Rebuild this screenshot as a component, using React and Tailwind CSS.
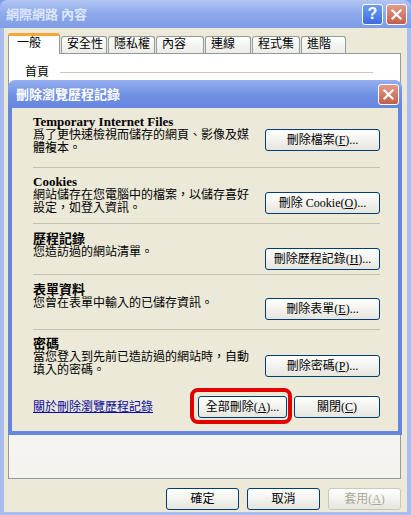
import React from 'react';

const XBtn = ({ className = '' }) => (
  <div className={`w-[21px] h-[21px] rounded-[3px] border border-white bg-linear-to-b from-[#E39A88] to-[#C25F4B] flex items-center justify-center ${className}`}>
    <svg width="13" height="13" viewBox="0 0 13 13">
      <path d="M2.5 2.5 L10.5 10.5 M10.5 2.5 L2.5 10.5" stroke="white" strokeWidth="2.2" strokeLinecap="square" />
    </svg>
  </div>
);

const HelpBtn = () => (
  <div className="w-[21px] h-[21px] rounded-[3px] border border-white bg-linear-to-b from-[#6E9BF2] to-[#3A6FE0] flex items-center justify-center">
    <span className="text-white font-bold text-[16px] leading-none font-['Liberation_Sans',sans-serif]">?</span>
  </div>
);

// XP style push button
const Btn = ({ children, className = '', disabled }) => (
  <div
    className={`h-[22px] rounded-[3px] border bg-linear-to-b from-white to-[#E6E5DE] flex items-center justify-center text-[12px] leading-none ${
      disabled ? 'border-[#C9C7BA] text-[#ACA899]' : 'border-[#003C74] text-black'
    } ${className}`}
  >
    {children}
  </div>
);

const Key = ({ k, suffix = '' }) => (
  <span>
    (<u>{k}</u>){suffix}
  </span>
);

const tabs = [
  { label: '安全性', w: 'w-[46px]' },
  { label: '隱私權', w: 'w-[47px]' },
  { label: '內容', w: 'w-[48px]' },
  { label: '連線', w: 'w-[46px]' },
  { label: '程式集', w: 'w-[48px]' },
  { label: '進階', w: 'w-[45px]' },
];

const sections = [
  {
    title: 'Temporary Internet Files',
    lines: ['爲了更快速檢視而儲存的網頁、影像及媒', '體複本。'],
    btn: <>刪除檔案<Key k="F" suffix="..." /></>,
    box: 'h-[52px] pt-0',
    btnTop: 'mt-[14px]',
  },
  {
    title: 'Cookies',
    lines: ['網站儲存在您電腦中的檔案，以儲存喜好', '設定，如登入資訊。'],
    btn: <>刪除 Cookie<Key k="O" suffix="..." /></>,
    box: 'h-[55px] pt-[7px]',
    btnTop: 'mt-[17px]',
  },
  {
    title: '歷程記錄',
    lines: ['您造訪過的網站清單。'],
    btn: <>刪除歷程記錄<Key k="H" suffix="..." /></>,
    box: 'h-[50px] pt-[8px]',
    btnTop: 'mt-[16px]',
  },
  {
    title: '表單資料',
    lines: ['您曾在表單中輸入的已儲存資訊。'],
    btn: <>刪除表單<Key k="E" suffix="..." /></>,
    box: 'h-[54px] pt-[8px]',
    btnTop: 'mt-[15px]',
  },
  {
    title: '密碼',
    lines: ['當您登入到先前已造訪過的網站時，自動', '填入的密碼。'],
    btn: <>刪除密碼<Key k="P" suffix="..." /></>,
    box: 'h-[50px] pt-[7px]',
    btnTop: 'mt-[18px]',
  },
];

export default function App() {
  return (
    <div className="w-[411px] h-[515px] relative bg-[#7E9BE6] overflow-hidden font-['Liberation_Serif','Noto_Sans_CJK_TC',serif] text-black">
      {/* outer title bar (inactive) */}
      <div className="h-[28px] rounded-t-[7px] bg-linear-to-b from-[#B2C6F4] via-[#8DA9EB] to-[#7F9CE6] flex items-center pl-[6px] pr-[4px] gap-[3px]">
        <span className="flex-1 text-[#DDE6FA] font-bold text-[13px] font-['Noto_Sans_CJK_TC',sans-serif]">網際網路 內容</span>
        <HelpBtn />
        <XBtn />
      </div>

      {/* outer body */}
      <div className="h-[487px] border-x-[4px] border-b-[3px] border-[#A8BCEE] bg-[#ECE9D8] flex flex-col pl-[4px] pr-[6px]">
        {/* tabs */}
        <div className="h-[25px] pt-[5px] flex items-end relative z-10">
          <div className="w-[52px] h-[21px] -mb-[1px] bg-white border border-[#919B9C] border-b-0 border-t-[3px] border-t-[#F5A83A] rounded-t-[3px] pl-[8px] text-[12px] leading-[15px]">
            一般
          </div>
          {tabs.map((t) => (
            <div
              key={t.label}
              className={`${t.w} h-[17px] ml-[1px] bg-linear-to-b from-white to-[#ECEBE5] border border-[#919B9C] border-b-0 rounded-t-[3px] pl-[5px] text-[12px] leading-[15px]`}
            >
              {t.label}
            </div>
          ))}
        </div>

        {/* tab panel */}
        <div className="h-[426px] border border-[#919B9C] bg-linear-to-b from-white to-[#F4F3EE] pt-[11px] pl-[16px] pr-[27px]">
          <div className="flex items-center gap-[11px] text-[12px] leading-[14px]">
            <span>首頁</span>
            <div className="flex-1 h-px bg-[#C9C8BC]" />
          </div>
        </div>

        {/* bottom buttons */}
        <div className="flex justify-end gap-[8px] mt-[9px]">
          <Btn className="w-[73px] h-[20px]">確定</Btn>
          <Btn className="w-[73px] h-[20px]">取消</Btn>
          <Btn className="w-[73px] h-[20px]" disabled>
            套用<Key k="A" />
          </Btn>
        </div>
      </div>

      {/* delete browsing history dialog */}
      <div className="absolute left-[8px] top-[80px] w-[394px] h-[355px] flex flex-col rounded-t-[7px] overflow-hidden">
        <div className="h-[28px] bg-linear-to-b from-[#95AFF0] via-[#7191E3] to-[#6586DF] flex items-center pl-[8px] pr-[3px]">
          <span className="flex-1 text-white font-bold text-[13px] font-['Noto_Sans_CJK_TC',sans-serif]">刪除瀏覽歷程記錄</span>
          <XBtn />
        </div>
        <div className="flex-1 border-x-[4px] border-b-[4px] border-[#6586DF] bg-[#ECE9D8] pl-[21px] pr-[18px] pt-[7px] flex flex-col">
          {sections.map((s, i) => (
            <React.Fragment key={i}>
              {i > 0 && <div className="h-px bg-[#C4C1AF]" />}
              <div className={`${s.box} flex justify-between`}>
                <div className="flex flex-col">
                  <div className="text-[13px] leading-[14px] font-bold">{s.title}</div>
                  {s.lines.map((l) => (
                    <div key={l} className="text-[12px] leading-[13px]">
                      {l}
                    </div>
                  ))}
                </div>
                <Btn className={`w-[115px] ${s.btnTop}`}>{s.btn}</Btn>
              </div>
            </React.Fragment>
          ))}

          <div className="flex items-center mt-[16px]">
            <span className="flex-1 text-[12px] leading-[14px] text-[#0A0A9E] underline">關於刪除瀏覽歷程記錄</span>
            <div className="relative">
              <Btn className="w-[89px]">
                全部刪除<Key k="A" suffix="..." />
              </Btn>
              <div className="absolute -left-[8px] -right-[5px] -top-[8px] -bottom-[6px] border-[4px] border-[#E00000] rounded-[8px]" />
            </div>
            <Btn className="w-[86px] ml-[7px]">
              關閉<Key k="C" />
            </Btn>
          </div>
        </div>
      </div>
    </div>
  );
}
